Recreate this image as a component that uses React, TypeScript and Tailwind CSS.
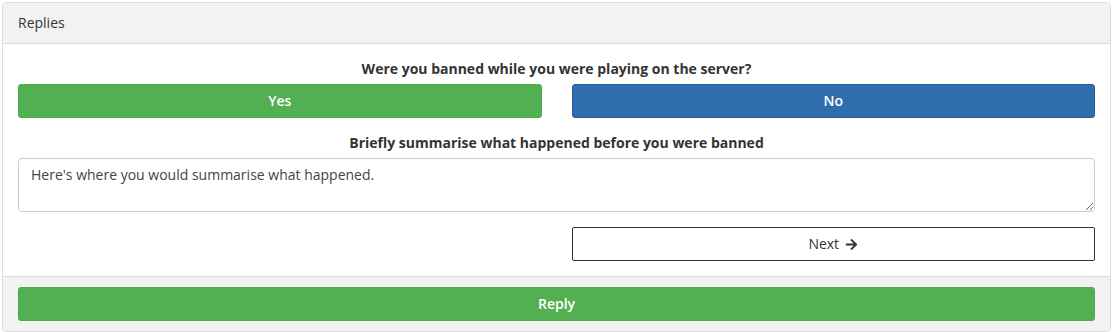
import { FaArrowRight } from "react-icons/fa";

export default function App() {
  return (
    <div className="min-h-screen bg-white p-[2px] font-['Open_Sans',sans-serif] text-[14px] leading-[20px] text-[#333]">
      <div className="overflow-hidden rounded-[4px] border border-[#dcdcdc] bg-white">
        <div className="h-[41px] border-b border-[#dcdcdc] bg-[#f2f2f2] px-[15px] py-[10px]">Replies</div>

        <div className="p-[15px]">
          <div className="mb-[15px]">
            <p className="mb-[5px] text-center font-bold">Were you banned while you were playing on the server?</p>
            <div className="grid grid-cols-2 gap-[30px]">
              <button className="h-[34px] rounded-[3px] border border-[#4cab4c] bg-[#52af52] font-semibold text-white">Yes</button>
              <button className="h-[34px] rounded-[3px] border border-[#285f99] bg-[#2e6eae] font-semibold text-white">No</button>
            </div>
          </div>

          <div className="mb-[15px]">
            <p className="mb-[5px] text-center font-bold">Briefly summarise what happened before you were banned</p>
            <textarea
              rows={2}
              defaultValue="Here's where you would summarise what happened."
              className="block h-[54px] w-full rounded-[4px] border border-[#ccc] px-[12px] py-[6px] text-[14px] leading-[20px] text-[#444] outline-none"
            />
          </div>

          <div className="grid grid-cols-2 gap-[30px]">
            <div />
            <button className="flex h-[34px] items-center justify-center gap-[6px] rounded-[2px] border border-[#333] bg-white text-[#333]">
              Next <FaArrowRight className="h-[13px] w-[13px]" />
            </button>
          </div>
        </div>

        <div className="border-t border-[#dcdcdc] bg-[#f2f2f2] px-[15px] py-[10px]">
          <button className="h-[34px] w-full rounded-[3px] border border-[#4cab4c] bg-[#52af52] font-semibold text-white">Reply</button>
        </div>
      </div>
    </div>
  );
}
